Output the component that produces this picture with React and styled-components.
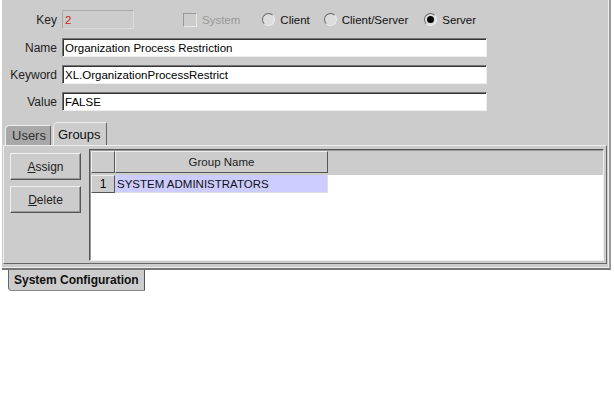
import React from "react";
import styled, { createGlobalStyle } from "styled-components";

const Global = createGlobalStyle`
  html, body { margin: 0; padding: 0; background: #ffffff; }
  body { font-family: "Liberation Sans", Arial, sans-serif; font-size: 11px; color: #000; }
`;

const Page = styled.div`
  width: 614px;
  height: 399px;
  background: #fff;
  display: flex;
  flex-direction: column;
`;

const Frame = styled.div`
  width: 609px;
  height: 270px;
  margin-left: 2px;
  background: #cccccc;
  border-right: 2px solid #999;
  border-bottom: 2px solid #777;
  box-shadow: inset -1px -1px 0 #eee;
  display: flex;
  flex-direction: column;
  padding-top: 10px;
  box-sizing: border-box;
`;

const FormRow = styled.div`
  display: flex;
  align-items: center;
  height: ${(p) => p.h || 19}px;
  margin-bottom: ${(p) => p.mb || 8}px;
`;

const Label = styled.div`
  width: 55px;
  text-align: right;
  padding-right: 5px;
  font-size: 12px;
  color: #222;
  box-sizing: content-box;
`;

const TextField = styled.div`
  width: ${(p) => p.w}px;
  height: ${(p) => p.hgt || 19}px;
  box-sizing: border-box;
  background: ${(p) => (p.disabled ? "#cccccc" : "#ffffff")};
  border: 1px solid ${(p) => (p.disabled ? "#aaa" : "#777")};
  border-right-color: ${(p) => (p.disabled ? "#ddd" : "#eee")};
  border-bottom-color: ${(p) => (p.disabled ? "#ddd" : "#eee")};
  box-shadow: ${(p) => (p.disabled ? "none" : "inset 1px 1px 0 #333")};
  padding-left: 2px;
  display: flex;
  align-items: center;
  font-size: 11.5px;
  color: ${(p) => p.color || "#000"};
  white-space: nowrap;
  overflow: hidden;
`;

const Options = styled.div`
  display: flex;
  align-items: center;
  margin-left: 49px;
`;

const Option = styled.div`
  display: flex;
  align-items: center;
  gap: 5px;
  margin-right: ${(p) => p.mr || 0}px;
  color: ${(p) => (p.disabled ? "#999" : "#111")};
  font-size: 11.5px;
`;

const CheckBox = styled.div`
  width: 12px;
  height: 12px;
  border: 1px solid #999;
  border-right-color: #e8e8e8;
  border-bottom-color: #e8e8e8;
  background: #ccc;
`;

const Radio = styled.div`
  width: 13px;
  height: 13px;
  border-radius: 50%;
  box-sizing: border-box;
  border: 1px solid #666;
  border-right-color: #eee;
  border-bottom-color: #eee;
  background: #ddd;
  display: flex;
  align-items: center;
  justify-content: center;
  &::after {
    content: "";
    width: 7px;
    height: 7px;
    border-radius: 50%;
    background: ${(p) => (p.checked ? "#000" : "transparent")};
  }
`;

const TabStrip = styled.div`
  display: flex;
  align-items: flex-end;
  margin-left: 3px;
  margin-top: 3px;
  height: 23px;
`;

const Tab = styled.div`
  height: ${(p) => (p.active ? 23 : 20)}px;
  box-sizing: border-box;
  padding: 0 ${(p) => (p.active ? 5 : 4)}px 0 ${(p) => (p.active ? 4 : 6)}px;
  margin-right: ${(p) => (p.active ? 0 : 2)}px;
  display: flex;
  align-items: center;
  font-size: 13px;
  color: ${(p) => (p.active ? "#111" : "#333")};
  background: ${(p) => (p.active ? "#cccccc" : "#a8a8a8")};
  border: 1px solid #eee;
  border-right-color: #666;
  border-bottom: none;
  border-top-left-radius: 5px;
  border-top-right-radius: 2px;
`;

const TabPanel = styled.div`
  margin-left: 1px;
  width: 604px;
  height: 119px;
  box-sizing: border-box;
  border-top: 1px solid #eee;
  border-left: 1px solid #eee;
  border-right: 1px solid #666;
  border-bottom: 1px solid #666;
  display: flex;
  padding: 3px 2px 2px 6px;
  gap: 8px;
`;

const ButtonCol = styled.div`
  display: flex;
  flex-direction: column;
  gap: 6px;
  padding-top: 4px;
`;

const Button = styled.div`
  width: 71px;
  height: 27px;
  box-sizing: border-box;
  border: 1px solid #f0f0f0;
  border-right-color: #555;
  border-bottom-color: #555;
  box-shadow: inset -1px -1px 0 #999;
  display: flex;
  align-items: center;
  justify-content: center;
  font-size: 12px;
  color: #222;
  & u { text-decoration: underline; }
`;

const Table = styled.div`
  flex: 1;
  background: #fff;
  border: 1px solid #555;
  border-right-color: #eee;
  border-bottom-color: #eee;
  box-shadow: inset 1px 1px 0 #999;
  display: flex;
  flex-direction: column;
  padding: 1px 0 0 1px;
`;

const HeaderRow = styled.div`
  display: flex;
  height: 22px;
  background: #cccccc;
  border-bottom: 2px solid #cccccc;
`;

const HeadCell = styled.div`
  width: ${(p) => p.w}px;
  box-sizing: border-box;
  border: 1px solid #eee;
  border-right-color: #555;
  border-bottom-color: #555;
  display: flex;
  align-items: center;
  justify-content: center;
  font-size: 11.5px;
  color: #222;
`;

const DataRow = styled.div`
  display: flex;
  height: 18px;
`;

const NumCell = styled.div`
  width: 24px;
  box-sizing: border-box;
  background: #cccccc;
  border: 1px solid #eee;
  border-right-color: #555;
  border-bottom-color: #555;
  display: flex;
  align-items: center;
  justify-content: center;
  font-size: 12px;
`;

const SelCell = styled.div`
  width: 213px;
  box-sizing: border-box;
  background: #ccccff;
  border-right: 1px solid #ddd;
  border-bottom: 1px solid #ddd;
  padding-left: 2px;
  display: flex;
  align-items: center;
  font-size: 11.5px;
  color: #111;
`;

const BottomTabs = styled.div`
  display: flex;
  padding-left: 8px;
`;

const BottomTab = styled.div`
  height: 21px;
  box-sizing: border-box;
  padding: 0 5px 0 5px;
  background: #cccccc;
  border-left: 1px solid #666;
  border-right: 1px solid #555;
  border-bottom: 1px solid #888;
  border-bottom-left-radius: 4px;
  display: flex;
  align-items: center;
  font-weight: bold;
  font-size: 12px;
  color: #111;
`;

export default function App() {
  return (
    <Page>
      <Global />
      <Frame>
        <FormRow h={19} mb={9}>
          <Label>Key</Label>
          <TextField w={72} disabled color="#cc2222">2</TextField>
          <Options>
            <Option disabled mr={22}><CheckBox />System</Option>
            <Option mr={14}><Radio />Client</Option>
            <Option mr={16}><Radio />Client/Server</Option>
            <Option><Radio checked />Server</Option>
          </Options>
        </FormRow>
        <FormRow mb={8}>
          <Label>Name</Label>
          <TextField w={425}>Organization Process Restriction</TextField>
        </FormRow>
        <FormRow mb={8}>
          <Label>Keyword</Label>
          <TextField w={425}>XL.OrganizationProcessRestrict</TextField>
        </FormRow>
        <FormRow mb={0}>
          <Label>Value</Label>
          <TextField w={425}>FALSE</TextField>
        </FormRow>
        <TabStrip>
          <Tab>Users</Tab>
          <Tab active>Groups</Tab>
        </TabStrip>
        <TabPanel>
          <ButtonCol>
            <Button><span><u>A</u>ssign</span></Button>
            <Button><span><u>D</u>elete</span></Button>
          </ButtonCol>
          <Table>
            <HeaderRow>
              <HeadCell w={24} />
              <HeadCell w={213}>Group Name</HeadCell>
            </HeaderRow>
            <DataRow>
              <NumCell>1</NumCell>
              <SelCell>SYSTEM ADMINISTRATORS</SelCell>
            </DataRow>
          </Table>
        </TabPanel>
      </Frame>
      <BottomTabs>
        <BottomTab>System Configuration</BottomTab>
      </BottomTabs>
    </Page>
  );
}
